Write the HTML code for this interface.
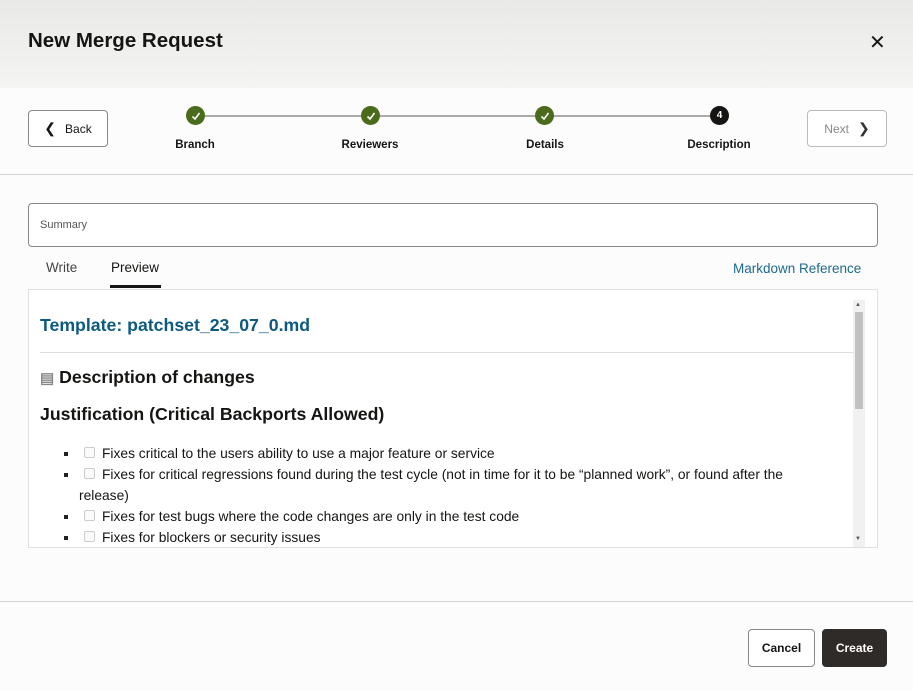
<!DOCTYPE html>
<html><head><meta charset="utf-8"><style>
*{box-sizing:border-box;margin:0;padding:0}
body{width:913px;height:690px;background:#fcfcfc;font-family:"Liberation Sans",sans-serif;color:#161513;position:relative;overflow:hidden}
.hdr{position:absolute;left:0;top:0;width:913px;height:88px;background:linear-gradient(#e9e9e8,#f4f4f3)}
.abs{position:absolute}
.btn{position:absolute;border:1px solid #8a8886;border-radius:4px;background:#fff;font-size:12px;display:flex;align-items:center;justify-content:center;gap:9px}
.circ{position:absolute;width:19px;height:19px;border-radius:50%;background:#4b6b1c;color:#fff;display:flex;align-items:center;justify-content:center}
.lbl{position:absolute;top:139px;font-size:11.5px;font-weight:bold;transform:translateX(-50%)}
li{list-style:none;position:relative;padding-left:50px;text-indent:23px;font-size:13.8px;line-height:21px}
li:before{content:"";position:absolute;left:35px;top:9px;width:4px;height:4px;background:#222}
li span{position:absolute;left:55px;top:4px;width:11px;height:11px;border:1px solid #ccc;border-radius:2px;background:#fafafa}
</style></head><body>
<div class="hdr"></div>
<div class="abs" style="left:28px;top:29px;font-size:20.5px;font-weight:bold">New Merge Request</div>
<div class="abs" style="left:869px;top:30px;font-size:20px">✕</div>
<div class="btn" style="left:28px;top:110px;width:80px;height:37px"><span style="font-size:14px">❮</span>Back</div>
<div class="btn" style="left:807px;top:110px;width:80px;height:37px;color:#8a8886;border-color:#bbb">Next<span style="font-size:14px;color:#333">❯</span></div>
<div class="abs" style="left:195px;top:115px;width:524px;height:1.5px;background:#aaa"></div>
<div class="circ" style="left:186px;top:106px"><svg width="10" height="10"><path d="M1.5 5.5L4 8L8.5 2" stroke="#fff" stroke-width="1.6" fill="none"/></svg></div>
<div class="circ" style="left:361px;top:106px"><svg width="10" height="10"><path d="M1.5 5.5L4 8L8.5 2" stroke="#fff" stroke-width="1.6" fill="none"/></svg></div>
<div class="circ" style="left:535px;top:106px"><svg width="10" height="10"><path d="M1.5 5.5L4 8L8.5 2" stroke="#fff" stroke-width="1.6" fill="none"/></svg></div>
<div class="circ" style="left:710px;top:106px;background:#161513;font-size:10px;font-weight:bold">4</div>
<div class="lbl" style="left:195px">Branch</div>
<div class="lbl" style="left:370px">Reviewers</div>
<div class="lbl" style="left:545px">Details</div>
<div class="lbl" style="left:719px">Description</div>
<div class="abs" style="left:0;top:174px;width:913px;height:1px;background:#d5d5d5"></div>
<div class="abs" style="left:28px;top:203px;width:850px;height:44px;border:1px solid #8a8886;border-radius:4px;background:#fff;font-size:11px;color:#555;padding:15px 0 0 11px">Summary</div>
<div class="abs" style="left:46px;top:260px;font-size:13.5px;color:#444">Write</div>
<div class="abs" style="left:111px;top:260px;font-size:13.5px">Preview</div>
<div class="abs" style="left:110px;top:285px;width:51px;height:3px;background:#161513"></div>
<div class="abs" style="left:733px;top:261px;font-size:13.5px;color:#1d6a8e">Markdown Reference</div>
<div class="abs" style="left:28px;top:289px;width:850px;height:259px;border:1px solid #e0e0e0;background:#fff;overflow:hidden">
 <div class="abs" style="left:11px;top:25px;font-size:17.7px;font-weight:bold;color:#0d5a80">Template: patchset_23_07_0.md</div>
 <div class="abs" style="left:11px;top:62px;width:813px;height:1px;background:#ddd"></div>
 <div class="abs" style="left:11px;top:77px;font-size:17.7px;font-weight:bold"><span style="font-size:15px;color:#888">▤</span> Description of changes</div>
 <div class="abs" style="left:11px;top:114px;font-size:17.7px;font-weight:bold">Justification (Critical Backports Allowed)</div>
 <ul class="abs" style="left:0;top:153px;width:771px">
  <li><span></span>Fixes critical to the users ability to use a major feature or service</li>
  <li><span></span>Fixes for critical regressions found during the test cycle (not in time for it to be “planned work”, or found after the release)</li>
  <li><span></span>Fixes for test bugs where the code changes are only in the test code</li>
  <li><span></span>Fixes for blockers or security issues</li>
 </ul>
 <div class="abs" style="left:824px;top:10px;width:12px;height:248px;background:#f1f1f1"></div>
 <div class="abs" style="left:826px;top:22px;width:8px;height:97px;background:#c1c1c1"></div>
 <div class="abs" style="left:826px;top:12px;font-size:6px;color:#555">▲</div>
 <div class="abs" style="left:826px;top:246px;font-size:6px;color:#555">▼</div>
</div>
<div class="abs" style="left:0;top:601px;width:913px;height:1px;background:#d5d5d5"></div>
<div class="btn" style="left:748px;top:629px;width:67px;height:38px;font-weight:bold">Cancel</div>
<div class="btn" style="left:822px;top:629px;width:65px;height:38px;font-weight:bold;background:#2f2b28;color:#fff;border-color:#2f2b28">Create</div>
</body></html>
